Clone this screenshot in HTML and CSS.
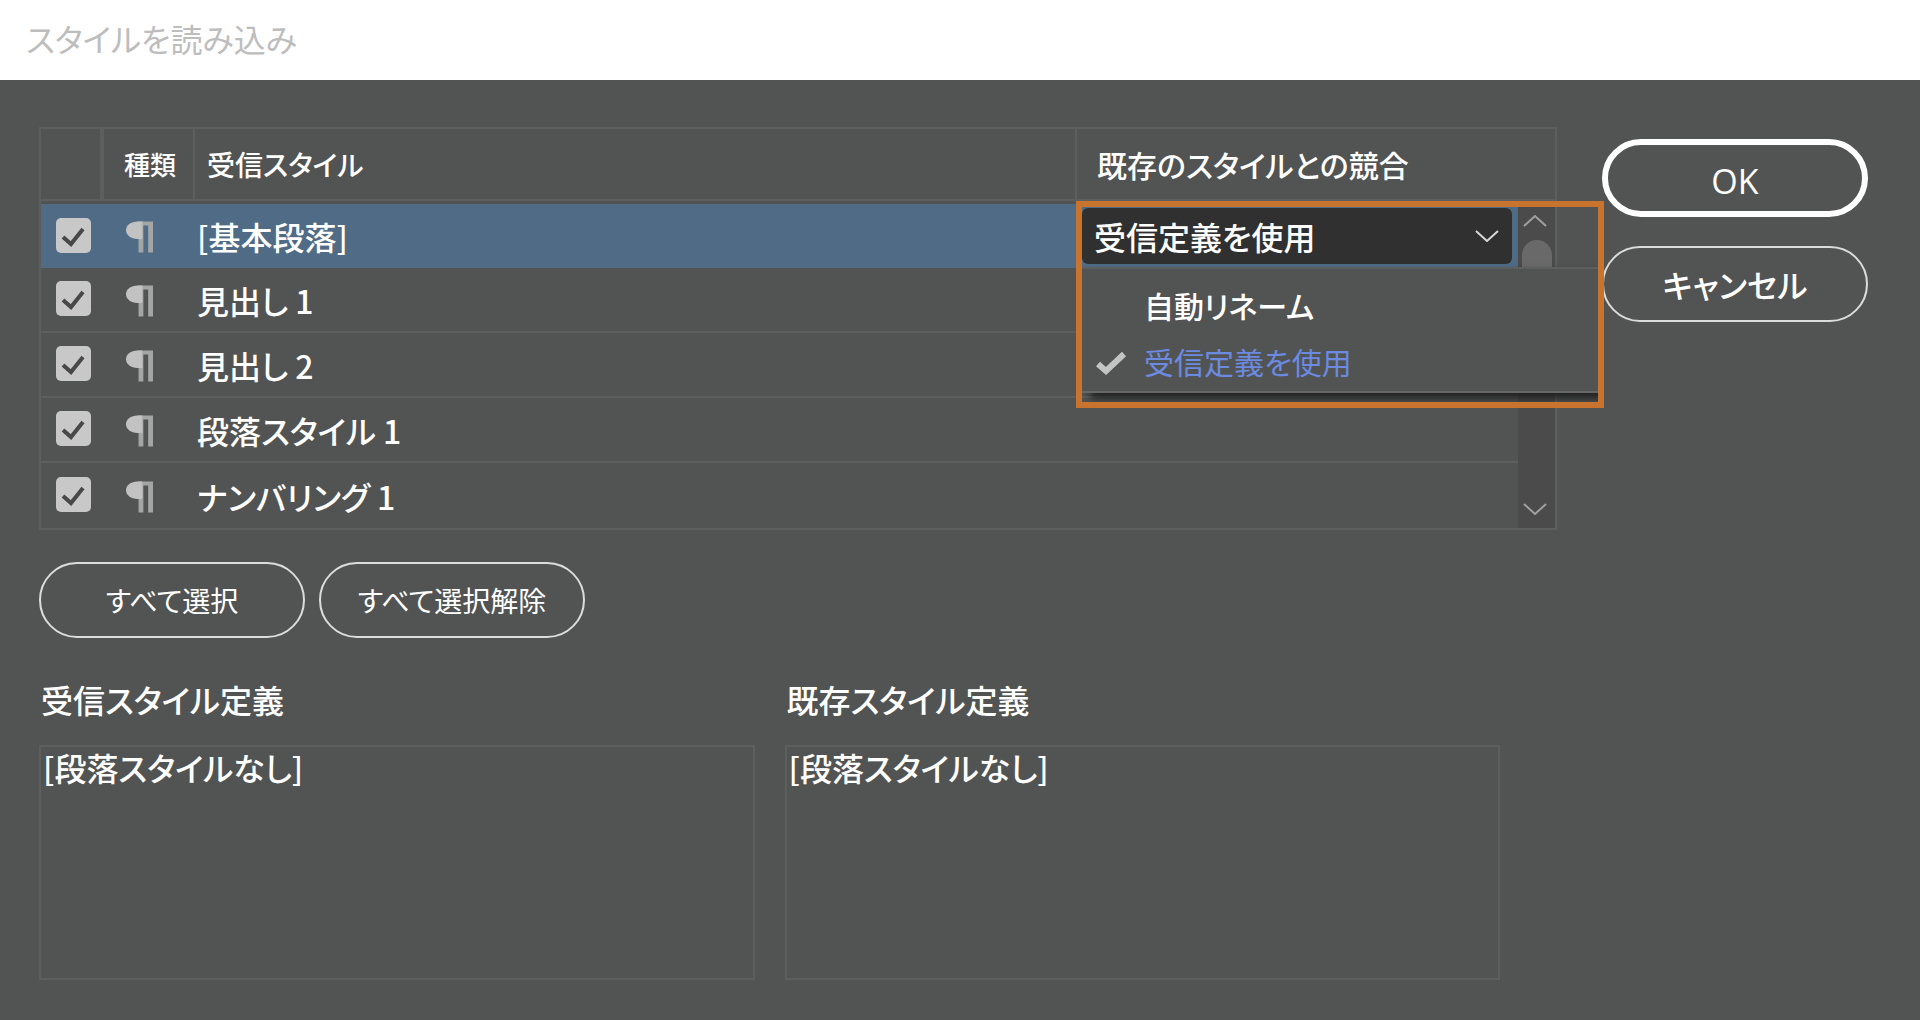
FILE: index.html
```html
<!DOCTYPE html>
<html lang="ja">
<head>
    <meta charset="UTF-8">
    <title>スタイルを読み込み</title>
    <meta name="viewport" content="width=device-width, initial-scale=1.0">
    <link rel="stylesheet" href="styles.css">
</head>
<body>
    <svg class="defs" aria-hidden="true">
        <symbol id="pilcrow" viewBox="0 0 28 32">
            <path class="pilcrow-stem" d="M12 0h16v32h-5V4h-5v28h-5V18z"/>
            <path class="pilcrow-bowl" d="M17 0v18h-5C5 18 0 14 0 9s5-9 12-9z"/>
        </symbol>
        <symbol id="up" viewBox="0 0 24 12"><path d="M1 11L12 1l11 10"/></symbol>
        <symbol id="down" viewBox="0 0 24 12"><path d="M1 1l11 10L23 1"/></symbol>
    </svg>

    <header class="titlebar">
        <h1>スタイルを読み込み</h1>
    </header>

    <main class="dialog">
        <div class="content">
            <div class="style-list">
                <table>
                    <colgroup>
                        <col class="col-check">
                        <col class="col-type">
                        <col class="col-name">
                        <col class="col-conflict">
                    </colgroup>
                    <thead>
                        <tr>
                            <th></th>
                            <th class="type">種類</th>
                            <th class="name">受信スタイル</th>
                            <th class="conflict-head">既存のスタイルとの競合</th>
                        </tr>
                    </thead>
                    <tbody>
                        <tr class="selected">
                            <td><input type="checkbox" id="style1" checked></td>
                            <td><svg class="pilcrow"><use href="#pilcrow"/></svg></td>
                            <td><label for="style1">[基本段落]</label></td>
                            <td class="conflict-cell">
                                <div class="conflict">
                                    <select aria-label="既存のスタイルとの競合">
                                        <option>自動リネーム</option>
                                        <option selected>受信定義を使用</option>
                                    </select>
                                    <svg class="arrow"><use href="#down"/></svg>
                                    <div class="popup">
                                        <ul class="menu" role="listbox" aria-label="既存のスタイルとの競合">
                                            <li role="option" aria-selected="false">自動リネーム</li>
                                            <li role="option" aria-selected="true" class="current">
                                                <svg class="tick" viewBox="0 0 32 24"><path d="M3 13l8 7L29 3"/></svg>
                                                受信定義を使用
                                            </li>
                                        </ul>
                                    </div>
                                </div>
                            </td>
                        </tr>
                        <tr>
                            <td><input type="checkbox" id="style2" checked></td>
                            <td><svg class="pilcrow"><use href="#pilcrow"/></svg></td>
                            <td><label for="style2">見出し 1</label></td>
                            <td></td>
                        </tr>
                        <tr>
                            <td><input type="checkbox" id="style3" checked></td>
                            <td><svg class="pilcrow"><use href="#pilcrow"/></svg></td>
                            <td><label for="style3">見出し 2</label></td>
                            <td></td>
                        </tr>
                        <tr>
                            <td><input type="checkbox" id="style4" checked></td>
                            <td><svg class="pilcrow"><use href="#pilcrow"/></svg></td>
                            <td><label for="style4">段落スタイル 1</label></td>
                            <td></td>
                        </tr>
                        <tr>
                            <td><input type="checkbox" id="style5" checked></td>
                            <td><svg class="pilcrow"><use href="#pilcrow"/></svg></td>
                            <td><label for="style5">ナンバリング 1</label></td>
                            <td></td>
                        </tr>
                    </tbody>
                </table>
                <div class="scrollbar">
                    <button type="button" aria-label="上へ"><svg class="arrow"><use href="#up"/></svg></button>
                    <div class="thumb"></div>
                    <button type="button" aria-label="下へ"><svg class="arrow"><use href="#down"/></svg></button>
                </div>
            </div>

            <div class="select-buttons">
                <button type="button" class="btn">すべて選択</button>
                <button type="button" class="btn">すべて選択解除</button>
            </div>

            <div class="definitions">
                <div class="definition">
                    <label for="incoming">受信スタイル定義</label>
                    <textarea id="incoming" readonly>[段落スタイルなし]</textarea>
                </div>
                <div class="definition">
                    <label for="existing">既存スタイル定義</label>
                    <textarea id="existing" readonly>[段落スタイルなし]</textarea>
                </div>
            </div>
        </div>

        <div class="actions">
            <button type="button" class="btn btn-ok">OK</button>
            <button type="button" class="btn btn-cancel">キャンセル</button>
        </div>
    </main>
</body>
</html>
```
FILE: styles.css
```css
* {
    box-sizing: border-box;
}
body {
    margin: 0;
    min-height: 100vh;
    background-color: #525453;
    color: #fff;
    font-family: "Noto Sans CJK JP", sans-serif;
    font-size: 32px;
    font-weight: 500;
}
body, button, select, textarea {
    font-feature-settings: "palt";
}
button, select, textarea {
    font-family: inherit;
    font-weight: inherit;
    color: inherit;
}
.defs {
    display: none;
}
.titlebar {
    display: flex;
    align-items: center;
    height: 80px;
    padding: 0 26px 4px;
    background: #fff;
}
h1 {
    margin: 0;
    color: #bdbdbd;
    font-size: 32px;
    font-weight: 400;
    line-height: 72px;
}
.dialog {
    display: flex;
    gap: 45px;
    padding: 47px 52px 40px 39px;
}
.content {
    flex: 1;
    min-width: 0;
}

/* style list */
.style-list {
    position: relative;
    border: 2px solid #5d5f5e;
}
table {
    width: 100%;
    table-layout: fixed;
    border-collapse: separate;
    border-spacing: 0;
}
.col-check {
    width: 63px;
}
.col-type {
    width: 91px;
}
.col-conflict {
    width: 478px;
}
th {
    height: 72px;
    padding: 0 12px;
    border-bottom: 2px solid #5d5f5e;
    border-right: 2px solid #5d5f5e;
    font-size: 28px;
    font-weight: 500;
    line-height: 40px;
    text-align: left;
    white-space: nowrap;
}
th:first-child {
    border-right-width: 4px;
}
th:last-child {
    border-right: 0;
}
th.type {
    padding: 0 20px;
    font-size: 26px;
}
th.conflict-head {
    padding: 0 20px;
    font-size: 30px;
}
td {
    height: 65px;
    padding: 0;
    border-bottom: 2px solid #5d5f5e;
    line-height: 48px;
}
tr:last-child td {
    border-bottom: 0;
}
.selected td {
    height: 67px;
    border-top: 3px solid transparent;
    border-bottom: 0;
    background: #506b86 padding-box;
}
td:nth-child(3) {
    padding-left: 2px;
}
input[type="checkbox"] {
    appearance: none;
    display: block;
    width: 35px;
    height: 35px;
    margin: 0 0 2px 15px;
    border-radius: 5px;
    background: #c8c8c8 url("data:image/svg+xml,%3Csvg xmlns='http://www.w3.org/2000/svg' viewBox='0 0 35 35'%3E%3Cpath d='M7 19l8 7L27 11' fill='none' stroke='%23484848' stroke-width='4'/%3E%3C/svg%3E");
}
.pilcrow {
    display: block;
    width: 27px;
    height: 32px;
    margin: 2px 0 0 22px;
}
.pilcrow-stem {
    fill: #a4a5a5;
}
.pilcrow-bowl {
    fill: #c2c2c2;
}
.arrow {
    display: block;
    width: 24px;
    height: 12px;
    fill: none;
    stroke: #a0a0a0;
    stroke-width: 2;
}

/* conflict drop-down */
.conflict-cell {
    vertical-align: top;
}
.conflict {
    position: relative;
    height: 64px;
    padding: 4px 43px 4px 5px;
}
.conflict select {
    appearance: none;
    display: block;
    width: 100%;
    height: 56px;
    padding: 0 12px;
    border: 0;
    border-radius: 6px;
    background: #303030;
    font-size: 32px;
}
.conflict > .arrow {
    position: absolute;
    top: 26px;
    right: 56px;
    stroke: #d8d8d8;
}
.popup {
    position: absolute;
    z-index: 2;
    top: -3px;
    left: -1px;
    right: -49px;
    height: 207px;
    padding-top: 60px;
    border: 6px solid #c8732e;
    overflow: hidden;
    pointer-events: none;
}
.menu {
    margin: 0;
    padding: 12px 0 4px;
    list-style: none;
    background: #525453;
    border-top: 2px solid #5d5f5e;
    border-bottom: 2px solid #666867;
    box-shadow: 8px 6px 8px #222;
}
.menu li {
    position: relative;
    padding-left: 62px;
    font-size: 30px;
    line-height: 48px;
}
.menu .current {
    padding-top: 6px;
    color: #6b8ae0;
    font-weight: 400;
    line-height: 52px;
}
.tick {
    position: absolute;
    top: 22px;
    left: 13px;
    width: 32px;
    height: 24px;
    fill: none;
    stroke: #c4c4c4;
    stroke-width: 6;
}

/* scrollbar */
.scrollbar {
    position: absolute;
    top: 72px;
    right: 0;
    bottom: 0;
    display: flex;
    flex-direction: column;
    align-items: center;
    width: 37px;
    background: #4b4b4b;
}
.scrollbar button {
    display: flex;
    align-items: center;
    justify-content: center;
    width: 100%;
    height: 39px;
    padding: 0 4px 0 0;
    border: 0;
    background: none;
}
.scrollbar .thumb {
    width: 30px;
    height: 60px;
    margin-bottom: auto;
    border-radius: 15px;
    background: #6a6969;
}

/* buttons */
.btn {
    width: 266px;
    height: 76px;
    padding: 0;
    border: 2px solid #dcdcdc;
    border-radius: 38px;
    background: none;
    font-size: 28px;
    line-height: 40px;
}
.select-buttons {
    display: flex;
    gap: 14px;
    margin-top: 32px;
    font-weight: 400;
}
.actions {
    display: flex;
    flex-direction: column;
    gap: 29px;
    padding-top: 12px;
}
.btn-ok {
    height: 78px;
    padding-top: 6px;
    border: 6px solid #fff;
    border-radius: 39px;
    font-family: "Open Sans", sans-serif;
    font-size: 34px;
}
.btn-cancel {
    font-size: 32px;
}

/* style definitions */
.definitions {
    display: grid;
    grid-template-columns: 1fr 1fr;
    gap: 30px;
    margin-top: 37px;
    padding-right: 57px;
}
.definition label {
    display: block;
    padding-left: 2px;
    line-height: 48px;
}
.definition textarea {
    display: block;
    width: 100%;
    height: 235px;
    margin-top: 22px;
    padding: 0 2px;
    border: 2px solid #5d5f5e;
    background: none;
    font-size: 32px;
    line-height: 40px;
    outline: none;
    resize: none;
}
```
